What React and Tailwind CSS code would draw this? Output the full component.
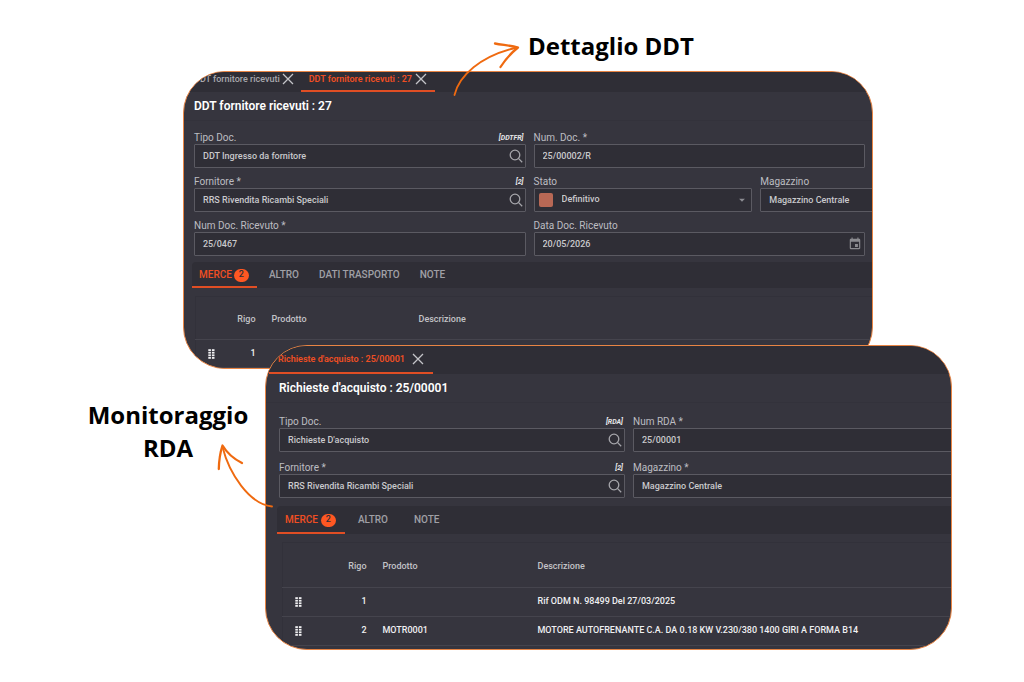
import React, { useId, useState } from 'react';
import { MdArrowDropDown, MdEvent } from 'react-icons/md';

const DDT_TABS = ['Merce', 'Altro', 'Dati trasporto', 'Note'];
const RDA_TABS = ['Merce', 'Altro', 'Note'];

const DDT_ROWS = [{ rigo: 1, prodotto: '', descrizione: '' }];
const RDA_ROWS = [
  { rigo: 1, prodotto: '', descrizione: 'Rif ODM N. 98499 Del 27/03/2025' },
  {
    rigo: 2,
    prodotto: 'MOTR0001',
    descrizione: 'MOTORE AUTOFRENANTE C.A. DA 0.18 KW V.230/380 1400 GIRI A FORMA B14',
  },
];

// ── Icons ──
function CloseIcon() {
  return (
    <svg width="12" height="12" viewBox="0 0 12 12" fill="none" stroke="currentColor" strokeWidth="1.3">
      <path d="M1 1l10 10M11 1L1 11" />
    </svg>
  );
}

function SearchIcon() {
  return (
    <svg width="14" height="14" viewBox="0 0 14 14" fill="none" stroke="currentColor" strokeWidth="1.3">
      <circle cx="6" cy="6" r="4.8" />
      <path d="M9.4 9.4l3.8 3.8" />
    </svg>
  );
}

function DragIcon() {
  return (
    <svg width="7" height="10" viewBox="0 0 7 10" fill="currentColor">
      {[0.2, 2.8, 5.4, 8].map((y) => (
        <g key={y}>
          <rect x="0.3" y={y} width="2.6" height="1.8" />
          <rect x="3.9" y={y} width="2.6" height="1.8" />
        </g>
      ))}
    </svg>
  );
}

// ── Form pieces ──
function Field({ label, code, value, icon, iconLabel, children }) {
  const id = useId();
  const [text, setText] = useState(value);
  return (
    <div className="min-w-0">
      <div className="flex h-3 items-center justify-between pr-[2px]">
        <label htmlFor={id} className="whitespace-nowrap text-[10px] leading-3 text-[#bdbdc2]">
          {label}
        </label>
        {code && <span className="text-[7px] font-bold italic leading-3 text-[#e6e6e8]">[{code}]</span>}
      </div>
      <div className="flex h-6 items-center rounded-[1px] border border-[#5b5a62] bg-[#2f2e36]">
        {children ? (
          children(id)
        ) : (
          <input
            id={id}
            value={text}
            onChange={(e) => setText(e.target.value)}
            className="h-full w-full min-w-0 flex-1 bg-transparent pl-2 text-[9px] font-medium text-[#c9c9cc] outline-none"
          />
        )}
        {icon && (
          <button aria-label={iconLabel} className="mr-[2px] shrink-0 text-[#a5a5aa]">
            {icon}
          </button>
        )}
      </div>
    </div>
  );
}

function PageTab({ title, active, className }) {
  return (
    <div
      className={`flex shrink-0 items-center border-b-2 ${
        active ? 'border-[#e04e24] font-semibold text-[#f04e23]' : 'border-transparent font-medium text-[#a9a9ae]'
      } ${className}`}
    >
      <button className="whitespace-nowrap text-[9px] leading-3">{title}</button>
      <button aria-label={`Chiudi ${title}`} className="text-[#c4c4c8]">
        <CloseIcon />
      </button>
    </div>
  );
}

function SectionTabs({ tabs, count, className, firstClass, tabClass }) {
  const [current, setCurrent] = useState(tabs[0]);
  return (
    <nav className={`flex rounded-tl bg-[#2f2e36] ${className}`}>
      {tabs.map((tab, i) => (
        <button
          key={tab}
          onClick={() => setCurrent(tab)}
          className={`flex items-center border-b-2 text-[10px] font-medium uppercase ${
            i === 0 ? firstClass : tabClass
          } ${tab === current ? 'border-[#e04e24] text-[#f04e23]' : 'border-transparent text-[#a0a0a6]'}`}
        >
          {tab}
          {i === 0 && (
            <span className="mt-[2px] flex h-[13px] w-[15px] items-center justify-center rounded-full bg-[#ff5722] text-[9px] text-[#2f2e36]">
              {count}
            </span>
          )}
        </button>
      ))}
    </nav>
  );
}

function RowsTable({ rows, cols, headClass, rowClass }) {
  return (
    <table className="w-full table-fixed border-collapse rounded-tl border-l border-t border-[#32313a] text-[9px] font-medium">
      <colgroup>
        <col className="w-[30px]" />
        <col className={cols[0]} />
        <col className={cols[1]} />
        <col />
      </colgroup>
      <thead>
        <tr className={`border-b border-[#45444d] text-left text-[#c3c3c7] ${headClass}`}>
          <th aria-label="Sposta" />
          <th className="pt-1 text-right font-medium">Rigo</th>
          <th className="pl-4 pt-1 font-medium">Prodotto</th>
          <th className="pt-1 font-medium">Descrizione</th>
        </tr>
      </thead>
      <tbody>
        {rows.map((row) => (
          <tr key={row.rigo} className={`border-b border-[#45444d] text-[#f0f0f2] ${rowClass}`}>
            <td className="pl-3">
              <DragIcon />
            </td>
            <td className="text-right">{row.rigo}</td>
            <td className="pl-4">{row.prodotto}</td>
            <td className="whitespace-nowrap">{row.descrizione}</td>
          </tr>
        ))}
      </tbody>
    </table>
  );
}

function Panel({ children, className }) {
  return (
    <section
      className={`min-w-0 overflow-hidden rounded-[42px] border border-[#e98544] bg-[#36353e] ${className}`}
    >
      {children}
    </section>
  );
}

// ── Panels ──
function DdtPanel() {
  return (
    <Panel className="ml-[183px] mr-[151px]">
      <div className="flex h-5 bg-[#2f2e36] pl-[10px]">
        <PageTab title="DDT fornitore ricevuti" className="-mt-1 gap-[2px]" />
        <PageTab title="DDT fornitore ricevuti : 27" active className="-mt-1 ml-[7px] gap-[3px] px-2" />
      </div>
      <h1 className="flex h-[29px] items-center border-b border-[#33323b] pl-[10px] text-xs font-semibold text-white">
        DDT fornitore ricevuti : 27
      </h1>
      <div className="grid grid-cols-2 gap-2 pb-[6px] pl-[10px] pr-[7px] pt-[11px]">
        <Field
          label="Tipo Doc."
          code="DDTFR"
          value="DDT Ingresso da fornitore"
          icon={<SearchIcon />}
          iconLabel="Cerca tipo documento"
        />
        <Field label="Num. Doc. *" value="25/00002/R" />
        <Field
          label="Fornitore *"
          code="2"
          value="RRS Rivendita Ricambi Speciali"
          icon={<SearchIcon />}
          iconLabel="Cerca fornitore"
        />
        <div className="flex gap-2">
          <div className="w-[66%] shrink-0">
            <Field label="Stato">
              {(id) => (
                <div className="relative flex h-full w-full items-center pl-1">
                  <span className="size-[14px] shrink-0 rounded-[2px] bg-[#b86855]" />
                  <select
                    id={id}
                    className="h-full flex-1 appearance-none bg-transparent pl-[9px] text-[9px] font-medium text-[#c9c9cc] outline-none"
                  >
                    <option>Definitivo</option>
                  </select>
                  <MdArrowDropDown size={14} className="pointer-events-none absolute right-[2px] text-[#8d8d93]" />
                </div>
              )}
            </Field>
          </div>
          <div className="w-2/3 shrink-0">
            <Field label="Magazzino" value="Magazzino Centrale" />
          </div>
        </div>
        <Field label="Num Doc. Ricevuto *" value="25/0467" />
        <Field
          label="Data Doc. Ricevuto"
          value="20/05/2026"
          icon={<MdEvent size={14} className="text-[#8b8b90]" />}
          iconLabel="Apri calendario"
        />
      </div>
      <SectionTabs
        tabs={DDT_TABS}
        count={2}
        className="ml-2 h-[26px]"
        firstClass="mr-[2px] gap-[2px] pl-[7px] pr-2"
        tabClass="px-[10px]"
      />
      <div className="ml-[11px] mt-2">
        <RowsTable
          rows={DDT_ROWS}
          cols={['w-[30px]', 'w-[163px]']}
          headClass="h-[43px]"
          rowClass="h-7"
        />
      </div>
    </Panel>
  );
}

function RdaPanel() {
  return (
    <Panel className="mr-[72px] flex-1">
      <div className="flex h-7 bg-[#2f2e36] pl-[3px]">
        <PageTab title="Richieste d'acquisto : 25/00001" active className="gap-[7px] pl-[9px] pr-[9px]" />
      </div>
      <h1 className="flex h-[29px] items-center border-b border-[#33323b] pl-[13px] text-xs font-semibold text-white">
        Richieste d'acquisto : 25/00001
      </h1>
      <div className="-mr-7 grid grid-cols-2 gap-x-2 gap-y-[10px] pb-2 pl-[13px] pt-[13px]">
        <Field
          label="Tipo Doc."
          code="RDA"
          value="Richieste D'acquisto"
          icon={<SearchIcon />}
          iconLabel="Cerca tipo documento"
        />
        <Field label="Num RDA *" value="25/00001" />
        <Field
          label="Fornitore *"
          code="2"
          value="RRS Rivendita Ricambi Speciali"
          icon={<SearchIcon />}
          iconLabel="Cerca fornitore"
        />
        <Field label="Magazzino *" value="Magazzino Centrale" />
      </div>
      <SectionTabs
        tabs={RDA_TABS}
        count={2}
        className="ml-[11px] h-7"
        firstClass="gap-[3px] pl-2 pr-[9px]"
        tabClass="px-[13px]"
      />
      <div className="mb-[3px] ml-4 mt-2">
        <RowsTable
          rows={RDA_ROWS}
          cols={['w-[54px]', 'w-[171px]']}
          headClass="h-[45px]"
          rowClass="h-[29px]"
        />
      </div>
    </Panel>
  );
}

export default function App() {
  return (
    <main className="relative min-h-screen overflow-hidden bg-white font-['Roboto',sans-serif]">
      <header className="flex h-[71px] pl-[528px] pt-[30px]">
        <h2 className="font-['Open_Sans',sans-serif] text-2xl font-bold leading-8 text-black">
          Dettaglio DDT
        </h2>
      </header>

      <DdtPanel />

      <div className="relative -mt-6 flex">
        <div className="w-[265px] shrink-0 pl-[72px] pt-[53px]">
          <h2 className="w-48 text-center font-['Open_Sans',sans-serif] text-2xl font-bold leading-[33px] text-black">
            Monitoraggio RDA
          </h2>
        </div>
        <RdaPanel />
      </div>

      {/* Hand-drawn arrows */}
      <svg
        className="pointer-events-none absolute left-[450px] top-[36px]"
        width="74"
        height="64"
        viewBox="0 0 74 64"
        fill="none"
        stroke="#ef6a10"
        strokeLinecap="round"
        strokeLinejoin="round"
      >
        <path d="M4.5 59C9 40 30 20 67 11.5" strokeWidth="1.8" />
        <path d="M45 7.5C53 9 61 9.5 68 11.5C61 17 55 24 50.5 31" strokeWidth="2.3" />
      </svg>
      <svg
        className="pointer-events-none absolute left-[214px] top-[440px]"
        width="62"
        height="70"
        viewBox="0 0 62 70"
        fill="none"
        stroke="#ef6a10"
        strokeLinecap="round"
        strokeLinejoin="round"
      >
        <path d="M8.5 7C15 33 35 64 58 66.5" strokeWidth="1.9" />
        <path d="M4.8 29C5 21 6 13 8.5 5.5C13 13 20 19 28 23" strokeWidth="2.3" />
      </svg>
    </main>
  );
}
